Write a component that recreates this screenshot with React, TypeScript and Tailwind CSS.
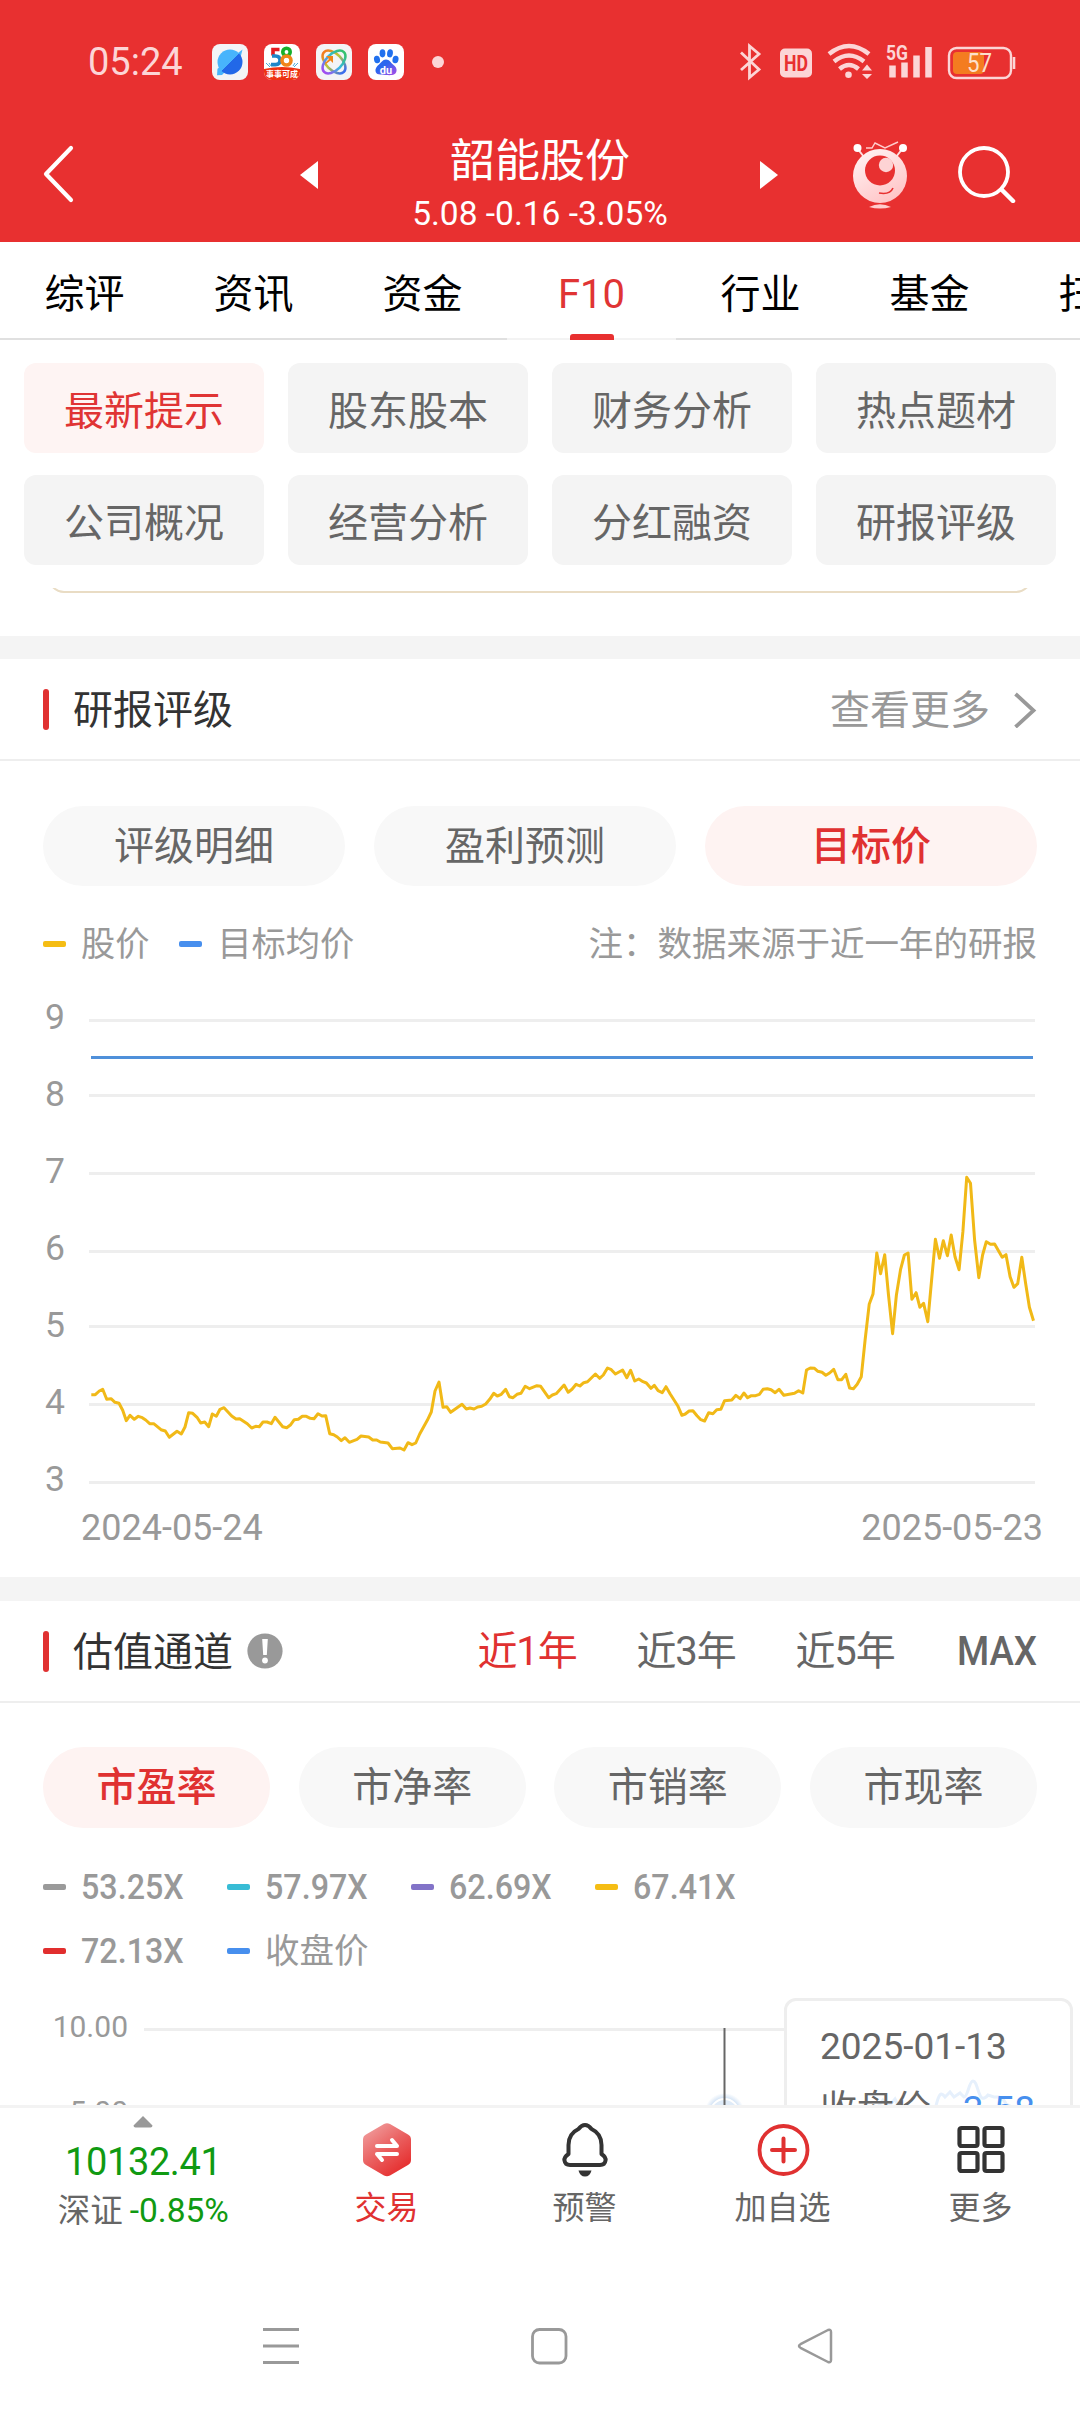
import type { ReactNode } from "react";
import clsx from "clsx";

const TABS = ["综评", "资讯", "资金", "F10", "行业", "基金", "扫雷"];

const MENU = [
    "最新提示", "股东股本", "财务分析", "热点题材",
    "公司概况", "经营分析", "分红融资", "研报评级",
];

const AXIS = [9, 8, 7, 6, 5, 4, 3];
const GRID_Y = [20.5, 95.5, 173.5, 251.5, 326.5, 404.5, 482.5];

const PRICE_LINE =
    "91.3,394.7 95.3,394.7 99.3,391 102.7,389.3 106.7,399.3 111,398.7 115,402.3 119,403.3 122.7,410.3 126.3,420.7 130,415.3 134.3,419.3 138.3,416.3 142.3,417.7 145.7,420 149.7,423.7 153.7,423.7 161,429.7 165.3,431 169.3,437.3 177,431.3 181.3,434 185,427 188.7,412.7 192.7,413.3 197,417.3 200.7,423 204.7,422 208.7,426.7 212.3,414 216.3,416.3 220,409.3 224,407.7 231.7,416 236,419 239.7,418.7 247.3,423.7 251.7,428 255.7,426.3 259.3,426.7 263,422 267,422 271.3,423.7 275,417.3 282.7,426.7 286.7,427.7 290.7,424.7 294.3,419.7 298.3,419.3 302.3,416.3 306.3,416.3 310.3,418.3 314,418.7 318,413.7 322,416 325.7,415.7 329.7,433.7 333.7,434.7 337.3,437 341.3,440.7 345,437.7 349.3,442.3 357,439.3 361,436 368.7,437 372.7,440 376.7,440 380.3,442 388,443 392.3,448.7 400,448 404,450 408,442.7 412,444.7 415.7,443 419.7,434 427.3,420.3 431.3,412 435,391 439,382 443,407.3 446.7,406.7 450.7,412.3 462,404.3 466.3,409 470,408 474,409 477.7,407 481.7,406.3 485.7,404 489.7,399.3 493.7,393.3 497.3,396 501.3,394.3 505.7,389.3 509.3,396.7 513,397.7 517,394.3 521,393.3 525.2,386.3 529.6,388.7 536.9,385.7 540.7,386.3 548.6,397.7 552.4,395 556.2,393.7 564.1,385 568.2,392.3 572,389.3 576.1,384.3 579.9,386 583.7,382.7 587.5,381.7 595.4,374 599.6,378.3 603.3,375 607.5,368 611.3,369.7 615.4,374 622.6,370 626.8,377.7 630.6,370.3 634.7,381 638.8,379 643,381.7 646.4,383 650.9,388.3 654.3,385.3 658.1,390.7 662.2,392.7 666,386.7 670.2,394 677.7,405.7 681.9,415.3 685.3,414 689.1,411 692.9,410.7 697,415.7 700.8,419.7 704.6,421 708.7,412.7 712.9,413.7 716.7,409.7 720.8,409.3 724.6,400.7 731.8,400 735.9,395.3 740.1,398.7 743.9,393 747.6,397.7 751.4,395.7 755.6,395.7 759.4,394.3 763.1,389.3 767.3,388.7 771.1,389.7 775.2,392.7 779,389.3 783.8,395.3 794.5,393.3 798.6,390.7 802.8,393 806.5,370 810.3,368 814.5,368.3 817.9,371.3 822,372.3 825.8,375.3 829.6,373 833.7,369.3 837.9,379.7 841.7,379.7 845.8,374.3 849.6,388 853.4,388.7 857.2,384.3 861.3,376.7 865.1,340 869.2,304.3 873,294 876.8,253 880.6,273.7 884.7,254.7 888.5,295 892.6,333.7 896.4,295 900.6,269.3 904.4,255 908.1,253 911.9,299.3 916.1,292.7 919.9,307.3 923.6,303.3 927.8,321.7 931.6,280 935.4,239.3 939.5,258.3 943.3,240.7 947.4,255.7 951.2,235 955,256.7 959.1,269.7 962.9,231.7 966.7,177.3 970.5,183.3 974.6,240 978.8,277.7 982.6,255 986.3,241.7 990.5,244.3 994.6,244 1002.2,257.3 1006,254.7 1010.1,276.7 1013.9,287.3 1017.7,283.7 1021.8,257.3 1025.6,283.3 1029.4,307.3 1033.5,320.7";

function StatusBar() {
    return (
        <div className="flex h-[108px] items-center pt-[16px] pl-[88px] text-[#fcd5d6]">
            <span className="w-[124px] text-[38px] leading-none">05:24</span>
            <div className="flex gap-[16px]">
                <svg width="36" height="36" viewBox="0 0 36 36">
                    <defs>
                        <linearGradient id="planet" x1="0" y1="0" x2="1" y2="1">
                            <stop offset="0.5" stopColor="#48b4fc" />
                            <stop offset="0.5" stopColor="#2268e8" />
                        </linearGradient>
                    </defs>
                    <rect width="36" height="36" rx="8" fill="#f3f4f6" />
                    <path d="M30.5 5.5l-1.5 6L10 31l-5 .2.5-6.5z" fill="#48b4fc" />
                    <circle cx="18" cy="18" r="12.5" fill="url(#planet)" />
                </svg>
                <svg width="36" height="36" viewBox="0 0 36 36">
                    <defs>
                        <clipPath id="tile58"><rect width="36" height="36" rx="8" /></clipPath>
                    </defs>
                    <g clipPath="url(#tile58)">
                        <rect width="36" height="36" fill="#fff" />
                        <path d="M0 25q18-4 36 0v11H0z" fill="#ee3311" />
                        <g fill="none" strokeWidth="3.6">
                            <path d="M15.500 5.500H9v6" stroke="#e41b20" />
                            <path d="M8 12h3.500q4.500 0 4.500 4.300t-4.500 4.300H7" stroke="#1d86c8" />
                            <circle cx="22.500" cy="8" r="3.700" stroke="#17b02c" />
                            <circle cx="22.500" cy="16.500" r="4.500" stroke="#f08519" />
                        </g>
                        <path d="M2 19l4 4M34 19l-4 4M5 19l2 3M31 19l-2 3" stroke="#4aaeda" strokeWidth="1" />
                        <text x="18" y="32.500" fontSize="8" fontWeight="700" fill="#fff" textAnchor="middle">事事可成</text>
                    </g>
                </svg>
                <svg width="36" height="36" viewBox="0 0 36 36">
                    <defs>
                        <linearGradient id="orbA" x1="0" y1="0" x2="1" y2="0">
                            <stop offset="0" stopColor="#f47c20" />
                            <stop offset="0.45" stopColor="#b9c93a" />
                            <stop offset="1" stopColor="#3a6df0" />
                        </linearGradient>
                        <linearGradient id="orbB" x1="1" y1="0" x2="0" y2="0">
                            <stop offset="0" stopColor="#35c26b" />
                            <stop offset="0.5" stopColor="#35b9e0" />
                            <stop offset="1" stopColor="#a24bf0" />
                        </linearGradient>
                    </defs>
                    <rect width="36" height="36" rx="8" fill="#f3f4f6" />
                    <g fill="none" strokeWidth="2.600">
                        <ellipse cx="18" cy="18" rx="14" ry="8" transform="rotate(45 18 18)" stroke="url(#orbA)" />
                        <ellipse cx="18" cy="18" rx="14" ry="8" transform="rotate(-45 18 18)" stroke="url(#orbB)" />
                    </g>
                    <path d="M10 12h7v7l-2.500-2.500L10 20l-1-1 4-4z" fill="#f08519" />
                </svg>
                <svg width="36" height="36" viewBox="0 0 36 36">
                    <defs>
                        <linearGradient id="paw" x1="0" y1="0" x2="1" y2="1">
                            <stop offset="0.4" stopColor="#2b66ee" />
                            <stop offset="1" stopColor="#b04be8" />
                        </linearGradient>
                    </defs>
                    <rect width="36" height="36" rx="8" fill="#fff" />
                    <g fill="#2170ee">
                        <ellipse cx="9" cy="15.500" rx="3" ry="3.800" transform="rotate(-12 9 15.500)" />
                        <ellipse cx="14.500" cy="9.300" rx="2.900" ry="4.100" />
                        <ellipse cx="22" cy="9.300" rx="2.900" ry="4.100" transform="rotate(8 22 9.300)" />
                        <ellipse cx="27.500" cy="15.500" rx="3" ry="3.800" transform="rotate(12 27.500 15.500)" />
                    </g>
                    <path d="M18 15.500c3.500 0 4.500 3 7 5s4 4 3.500 6.500c-.6 4-4.500 4.500-10.500 4s-10 0-10.500-4C7 24.500 9 22 11 20.500s3.500-5 7-5z" fill="url(#paw)" />
                    <text x="18" y="29.500" fontSize="11" fontWeight="700" fill="#fff" textAnchor="middle">du</text>
                </svg>
            </div>
            <span className="ml-[28px] size-[12px] rounded-full bg-[#fcd5d6]" />
            <svg className="ml-[294px] shrink-0" width="282" height="40" viewBox="738 44 282 40" fill="none" stroke="#fcd5d6">
                <path d="M741 54.500l18 17-9.500 8V48l9.500 8-18 16" strokeWidth="2.800" />
                <rect x="780" y="50.500" width="32" height="29" rx="5" fill="#fcd5d6" stroke="none" />
                <text x="796" y="73" fontSize="22" fontWeight="700" fill="#e83030" stroke="none" textAnchor="middle" textLength="24" lengthAdjust="spacingAndGlyphs">HD</text>
                <path d="M829 56q20-16 40 0M834 63.500q15-12 30 0M839.500 71q9.500-8 19 0" strokeWidth="4.500" />
                <circle cx="848.500" cy="76.800" r="3.300" fill="#fcd5d6" stroke="none" />
                <path d="M867 66.500l5 6h-10zM867 81l5-5h-10z" fill="#fcd5d6" stroke="none" />
                <text x="886" y="62" fontSize="21" fontWeight="700" fill="#fcd5d6" stroke="none" textLength="22" lengthAdjust="spacingAndGlyphs">5G</text>
                <path d="M892.500 67.500v12M904.500 64.500v15M916.500 57.500v22M928.500 49v30.500" strokeWidth="6.500" />
                <rect x="949" y="50" width="62" height="30" rx="7.500" strokeWidth="2.400" />
                <rect x="953" y="54" width="31" height="22" rx="4" fill="#f47c20" stroke="none" />
                <path d="M1014 59v12" strokeWidth="2.600" />
                <text x="979.500" y="73.500" fontSize="25" fill="#fde0cc" stroke="none" textAnchor="middle" textLength="25" lengthAdjust="spacingAndGlyphs">57</text>
            </svg>
        </div>
    );
}

function RobotIcon() {
    return (
        <svg width="56" height="72" viewBox="0 0 56 72">
            <defs>
                <linearGradient id="robot" x1="0.200" y1="0" x2="0.800" y2="1">
                    <stop offset="0" stopColor="#fff2f2" />
                    <stop offset="1" stopColor="#ffc2c4" />
                </linearGradient>
            </defs>
            <path d="M14 9h6l3-5 10 5 13-6" fill="none" stroke="#fcc" strokeWidth="1.400" />
            <path d="M5 9l7 9M51 9l-7 9" stroke="#fdd" strokeWidth="2" />
            <circle cx="5.500" cy="9" r="4" fill="#fff" />
            <circle cx="51" cy="9" r="4" fill="#fff" />
            <circle cx="28" cy="37" r="27" fill="url(#robot)" />
            <circle cx="28" cy="31.500" r="15" fill="#e83030" />
            <circle cx="34" cy="26" r="7.200" fill="#fdd3d4" />
            <path d="M27 54q11 2 14-5" fill="none" stroke="#e83030" strokeWidth="1.600" />
            <path d="M17 68q11-5.500 22 0-11 3-22 0z" fill="#fcc" />
        </svg>
    );
}

function Header() {
    return (
        <header className="h-[242px] bg-[#e83030] text-white">
            <StatusBar />
            <div className="flex h-[134px] items-center">
                <svg className="mb-[4px] ml-[40px]" width="36" height="60" viewBox="0 0 36 60" fill="none" stroke="#fff" strokeWidth="4.200" strokeLinecap="round" strokeLinejoin="round">
                    <path d="M31 5L6 31l25 26" />
                </svg>
                <svg className="ml-[223px]" width="20" height="28" viewBox="0 0 20 28" fill="#fff">
                    <path d="M19 0v28L1 14z" />
                </svg>
                <div className="flex w-[442px] flex-col items-center pt-[19px]">
                    <h1 className="text-[45px] leading-[50px]">韶能股份</h1>
                    <p className="mt-[7px] -mb-[1px] text-[33.5px] leading-[40px] whitespace-nowrap">5.08 -0.16 -3.05%</p>
                </div>
                <svg className="-ml-[1px]" width="20" height="28" viewBox="0 0 20 28" fill="#fff">
                    <path d="M0 0v28l18-14z" />
                </svg>
                <div className="ml-[72px]">
                    <RobotIcon />
                </div>
                <svg className="mb-[4px] ml-[49px]" width="60" height="60" viewBox="0 0 60 60" fill="none" stroke="#fff" strokeWidth="3.800" strokeLinecap="round">
                    <circle cx="27" cy="29" r="24" />
                    <path d="M44.500 46.500l11.500 11.500" strokeWidth="4.500" />
                </svg>
            </div>
        </header>
    );
}

function TabBar() {
    return (
        <nav className="flex h-[98px] shrink-0 overflow-hidden bg-white">
            {TABS.map((tab) => {
                const active = tab === "F10";
                return (
                    <div
                        key={tab}
                        className={clsx(
                            "flex w-[169px] shrink-0 flex-col items-center border-b-2 pt-[31px]",
                            active ? "border-[#f3f3f3] text-[#e03434]" : "border-[#e0e0e0] text-black",
                        )}
                    >
                        <span className="text-[40px] leading-[44px]">{tab}</span>
                        {active && <span className="mt-[17px] -mb-[2px] h-[6px] w-[44px] rounded-t-[3px] bg-[#e83030]" />}
                    </div>
                );
            })}
        </nav>
    );
}

function Pill({ active, className, children }: { active?: boolean; className: string; children: ReactNode }) {
    return (
        <div
            className={clsx(
                "flex items-center justify-center rounded-full pt-[1px] text-[40px] leading-none",
                active ? "bg-[#fef3f2] font-medium text-[#e03131]" : "bg-[#f8f8f8] text-[#666]",
                className,
            )}
        >
            {children}
        </div>
    );
}

function Legend({ color, children }: { color: string; children: ReactNode }) {
    return (
        <div className="flex items-center gap-[15px]">
            <span className={clsx("h-[6px] w-[23px] rounded-[2px]", color)} />
            {children}
        </div>
    );
}

function SectionTitle({ title, children }: { title: string; children: ReactNode }) {
    return (
        <div className="flex h-[102px] items-center border-b-2 border-[#eee] pr-[43px] pl-[43px]">
            <span className="h-[41px] w-[6px] rounded-full bg-[#e03131]" />
            <h2 className="ml-[24px] pt-[3px] text-[40px] leading-none text-[#333]">{title}</h2>
            {children}
        </div>
    );
}

function TargetPrice() {
    return (
        <section className="h-[918px]">
            <SectionTitle title="研报评级">
                <span className="ml-auto pt-[3px] text-[40px] leading-none text-[#999]">查看更多</span>
                <svg className="ml-[23px]" width="24" height="38" viewBox="0 0 24 38" fill="none" stroke="#999" strokeWidth="3.800">
                    <path d="M2.500 4L20.500 20.500 2.500 37" />
                </svg>
            </SectionTitle>
            <div className="flex gap-[29px] px-[43px] pt-[45px]">
                <Pill className="h-[80px] w-[302px]">评级明细</Pill>
                <Pill className="h-[80px] w-[302px]">盈利预测</Pill>
                <Pill active className="h-[80px] w-[332px]">目标价</Pill>
            </div>
            <div className="mt-[36px] flex h-[44px] items-center gap-[30px] px-[43px] text-[34.2px] leading-none text-[#999]">
                <Legend color="bg-[#f5bd14]">股价</Legend>
                <Legend color="bg-[#478fee]">目标均价</Legend>
                <span className="ml-auto text-[34.5px]">注：数据来源于近一年的研报</span>
            </div>
            <div className="mt-[13px] flex text-[35.5px] text-[#999]">
                <div className="flex w-[89px] flex-col pl-[45px]">
                    {AXIS.map((n) => (
                        <span key={n} className="h-[77px] leading-[77px]">{n}</span>
                    ))}
                </div>
                <svg className="mt-[21px]" width="960" height="500" viewBox="89 0 960 500" fill="none">
                    {GRID_Y.map((y) => (
                        <path key={y} d={`M89 ${y}H1035`} stroke="#eee" strokeWidth="3" />
                    ))}
                    <path d="M91 57.500H1033" stroke="#4f90da" strokeWidth="3" />
                    <polyline points={PRICE_LINE} stroke="#f1b917" strokeWidth="3" strokeLinejoin="round" />
                </svg>
            </div>
            <div className="-mt-[8px] flex justify-between pr-[37px] pl-[81px] text-[36px] leading-none text-[#999]">
                <span>2024-05-24</span>
                <span>2025-05-23</span>
            </div>
        </section>
    );
}

const RANGES = [
    { label: "近1年", active: true },
    { label: "近3年" },
    { label: "近5年" },
    { label: "MAX" },
];

const BANDS = [
    { label: "53.25X", color: "bg-[#9a9a9a]" },
    { label: "57.97X", color: "bg-[#38bcd5]" },
    { label: "62.69X", color: "bg-[#8273c8]" },
    { label: "67.41X", color: "bg-[#f5bd14]" },
    { label: "72.13X", color: "bg-[#e12e2e]" },
    { label: "收盘价", color: "bg-[#478fee]", cjk: true },
];

function Valuation() {
    return (
        <section>
            <SectionTitle title="估值通道">
                <svg className="ml-[14px]" width="36" height="36" viewBox="0 0 36 36">
                    <circle cx="18" cy="18" r="17.600" fill="#999" />
                    <path d="M15.200 6h5.600l-1 16h-3.600z" fill="#fff" />
                    <circle cx="18" cy="27.500" r="2.900" fill="#fff" />
                </svg>
                <div className="ml-auto flex gap-[60px] pt-[2px] text-[40px] leading-none text-[#666]">
                    {RANGES.map((r) => (
                        <span
                            key={r.label}
                            className={clsx(
                                "flex items-center justify-center whitespace-nowrap",
                                r.label === "MAX" ? "w-[80px] scale-x-[0.92] font-medium" : "w-[99px] pr-[5px] tracking-[-1.2px]",
                                r.active && "text-[#e03131]",
                            )}
                        >
                            {r.label}
                        </span>
                    ))}
                </div>
            </SectionTitle>
            <div className="flex justify-between px-[43px] pt-[44px]">
                <Pill active className="h-[81px] w-[227px]">市盈率</Pill>
                <Pill className="h-[81px] w-[227px]">市净率</Pill>
                <Pill className="h-[81px] w-[227px]">市销率</Pill>
                <Pill className="h-[81px] w-[227px]">市现率</Pill>
            </div>
            <div className="mt-[27px] grid w-[779px] grid-cols-4 pl-[43px] text-[34.5px] leading-[64px] text-[#999]">
                {BANDS.map((b) => (
                    <Legend key={b.label} color={b.color}>
                        <span className={clsx("whitespace-nowrap", !b.cjk && "origin-left scale-x-[0.935] font-medium")}>{b.label}</span>
                    </Legend>
                ))}
            </div>
            <div className="relative mt-px h-[300px] text-[30px] leading-none text-[#999]">
                <svg width="1080" height="130" viewBox="0 1984 1080 130" fill="none">
                    <defs>
                        <radialGradient id="halo">
                            <stop offset="0.550" stopColor="#b5d0ee" />
                            <stop offset="1" stopColor="#b5d0ee" stopOpacity="0" />
                        </radialGradient>
                    </defs>
                    <path d="M144 2029.500H1035" stroke="#eee" strokeWidth="3" />
                    <circle cx="724.500" cy="2113" r="20" fill="url(#halo)" />
                    <circle cx="724.500" cy="2113" r="14" fill="#dfebf8" stroke="#fff" strokeWidth="2" />
                    <path d="M724.500 2028v86" stroke="#666" strokeWidth="2" />
                </svg>
                <span className="absolute top-[28px] right-[952px]">10.00</span>
                <span className="absolute top-[113px] right-[952px]">5.00</span>
                {/* tooltip over the chart */}
                <div className="absolute top-[14px] left-[784px] h-[260px] w-[289px] rounded-[12px] border-[3px] border-[#eee] bg-white/95 pt-[26px] pr-[35px] pl-[33px] text-[#666]">
                    <svg className="absolute top-[77px] left-[90px]" width="170" height="34" viewBox="0 0 170 34" fill="none" stroke="#e6f0fc" strokeWidth="3">
                        <path d="M0 30l6-8 6 6 6-7 4 8M58 32c4-18 6-18 10-13l5-5 4 5 6-4 4 4c4 0 5-16 9-16s5 14 9 17q3 1 6-3l6 2h5q5 2 7 7l10 5" />
                    </svg>
                    <p className="relative text-[37px] leading-[40px]">2025-01-13</p>
                    <div className="relative mt-[21px] flex items-center justify-between">
                        <span className="text-[37px] leading-[44px]">收盘价</span>
                        <span className="text-[37px] leading-[44px] text-[#478fee]">3.58</span>
                    </div>
                </div>
            </div>
        </section>
    );
}

function BottomItem({ label, red, icon }: { label: string; red?: boolean; icon: ReactNode }) {
    return (
        <div className="flex w-[198px] flex-col items-center pt-[14px]">
            {icon}
            <span className={clsx("mt-[10px] text-[32px] leading-[40px]", red ? "text-[#e03131]" : "text-[#666]")}>{label}</span>
        </div>
    );
}

function BottomBar() {
    return (
        <footer className="flex h-[160px] shrink-0 border-t-[3px] border-[#f3f3f3] bg-white">
            <div className="flex w-[287.5px] flex-col items-center pt-[8px] pr-[1px]">
                <svg width="20" height="12" viewBox="0 0 20 12" fill="#999">
                    <path d="M10 0l9.500 9.500q0 2-2 2h-15q-2 0-2-2z" />
                </svg>
                <span className="mt-[14px] text-[38px] leading-[40px] tracking-[-0.4px] text-[#109a12]">10132.41</span>
                <span className="mt-[7px] text-[32.5px] leading-[44px] text-[#666]">
                    深证 <span className="-ml-[1px] text-[33.5px] text-[#109a12]">-0.85%</span>
                </span>
            </div>
            <BottomItem
                label="交易"
                red
                icon={
                    <svg width="50" height="56" viewBox="0 0 50 56">
                        <defs>
                            <linearGradient id="trade" x1="0.100" y1="0" x2="0.800" y2="1">
                                <stop offset="0" stopColor="#f1a3a3" />
                                <stop offset="0.500" stopColor="#ea6060" />
                                <stop offset="1" stopColor="#e52828" />
                            </linearGradient>
                        </defs>
                        <path d="M22 2q3-1.500 6 0l18 10.500q3 1.700 3 5V38q0 3.300-3 5L28 53.500q-3 1.500-6 0L4 43q-3-1.700-3-5V17.500q0-3.300 3-5z" fill="url(#trade)" />
                        <path d="M15 24h20l-5-6M35 32H15l5 6" fill="none" stroke="#fff" strokeWidth="4" strokeLinecap="round" strokeLinejoin="round" />
                    </svg>
                }
            />
            <BottomItem
                label="预警"
                icon={
                    <svg width="50" height="56" viewBox="0 0 50 56" fill="none">
                        <path d="M25 3c-3.500 0-5 2-6.500 4C12 10 8.500 16 8.500 23v9c-3 2-4.500 4-4 6.500.4 3 2.500 4.500 5.500 4.500h30c3 0 5.100-1.500 5.500-4.500.5-2.500-1-4.500-4-6.500v-9c0-7-3.500-13-10-16-1.500-2-3-4-6.500-4z" stroke="#333" strokeWidth="4" strokeLinejoin="round" />
                        <path d="M18.500 48.500h13q-1.500 6-6.500 6t-6.500-6z" fill="#333" />
                    </svg>
                }
            />
            <BottomItem
                label="加自选"
                icon={
                    <svg width="56" height="56" viewBox="0 0 56 56" fill="none" stroke="#e03131" strokeWidth="3.800" strokeLinecap="round">
                        <circle cx="28.500" cy="28" r="24" />
                        <path d="M17 28h23M28.500 16.500v23" strokeWidth="4" />
                    </svg>
                }
            />
            <BottomItem
                label="更多"
                icon={
                    <svg width="56" height="56" viewBox="0 0 56 56" fill="none" stroke="#333" strokeWidth="4.200">
                        <rect x="6.500" y="6" width="18" height="18" rx="2" />
                        <rect x="31.500" y="6" width="18" height="18" rx="2" />
                        <rect x="6.500" y="31" width="18" height="18" rx="2" />
                        <rect x="31.500" y="31" width="18" height="18" rx="2" />
                    </svg>
                }
            />
        </footer>
    );
}

function SystemNav() {
    return (
        <div className="flex h-[147px] items-start pt-[62px] pl-[262px]">
            <svg width="38" height="38" viewBox="0 0 38 38" stroke="#999" strokeWidth="3">
                <path d="M1 2.500h36M1 19h36M1 35.500h36" />
            </svg>
            <svg className="ml-[230px]" width="38" height="38" viewBox="0 0 38 38" fill="none" stroke="#999" strokeWidth="2.800">
                <rect x="2.500" y="2.500" width="33.500" height="33.500" rx="7" />
            </svg>
            <svg className="ml-[229px]" width="38" height="38" viewBox="0 0 38 38" fill="none" stroke="#999" strokeWidth="2.500" strokeLinejoin="round">
                <path d="M31 3L3.500 17.200q-3 1.800 0 3.600L31 35q3 1 3-2V5q0-3-3-2z" />
            </svg>
        </div>
    );
}

export default function App() {
    return (
        <div className="flex h-[2412px] w-[1080px] flex-col overflow-hidden bg-white font-[Roboto,'Noto_Sans_CJK_SC',sans-serif]">
            <Header />
            <TabBar />
            <main className="h-[1765px] shrink-0 overflow-hidden">
                <div className="grid grid-cols-4 gap-x-[24px] gap-y-[22px] px-[24px] pt-[23px]">
                    {MENU.map((item, i) => (
                        <div
                            key={item}
                            className={clsx(
                                "flex h-[90px] items-center justify-center rounded-[12px] pt-[7px] text-[40px] leading-none",
                                i === 0 ? "bg-[#fef4f3] text-[#e03434]" : "bg-[#f4f4f4] text-[#666]",
                            )}
                        >
                            {item}
                        </div>
                    ))}
                </div>
                {/* tail of the card scrolled under the menu */}
                <div className="mx-[48px] mt-[23px] flex h-[5px] flex-col justify-end overflow-hidden">
                    <div className="h-[40px] shrink-0 rounded-[16px] border-2 border-[#e9dcc4]" />
                </div>
                <div className="mt-[43px] h-[23px] bg-[#f4f4f4]" />
                <TargetPrice />
                <div className="h-[24px] bg-[#f4f4f4]" />
                <Valuation />
            </main>
            <BottomBar />
            <SystemNav />
        </div>
    );
}
